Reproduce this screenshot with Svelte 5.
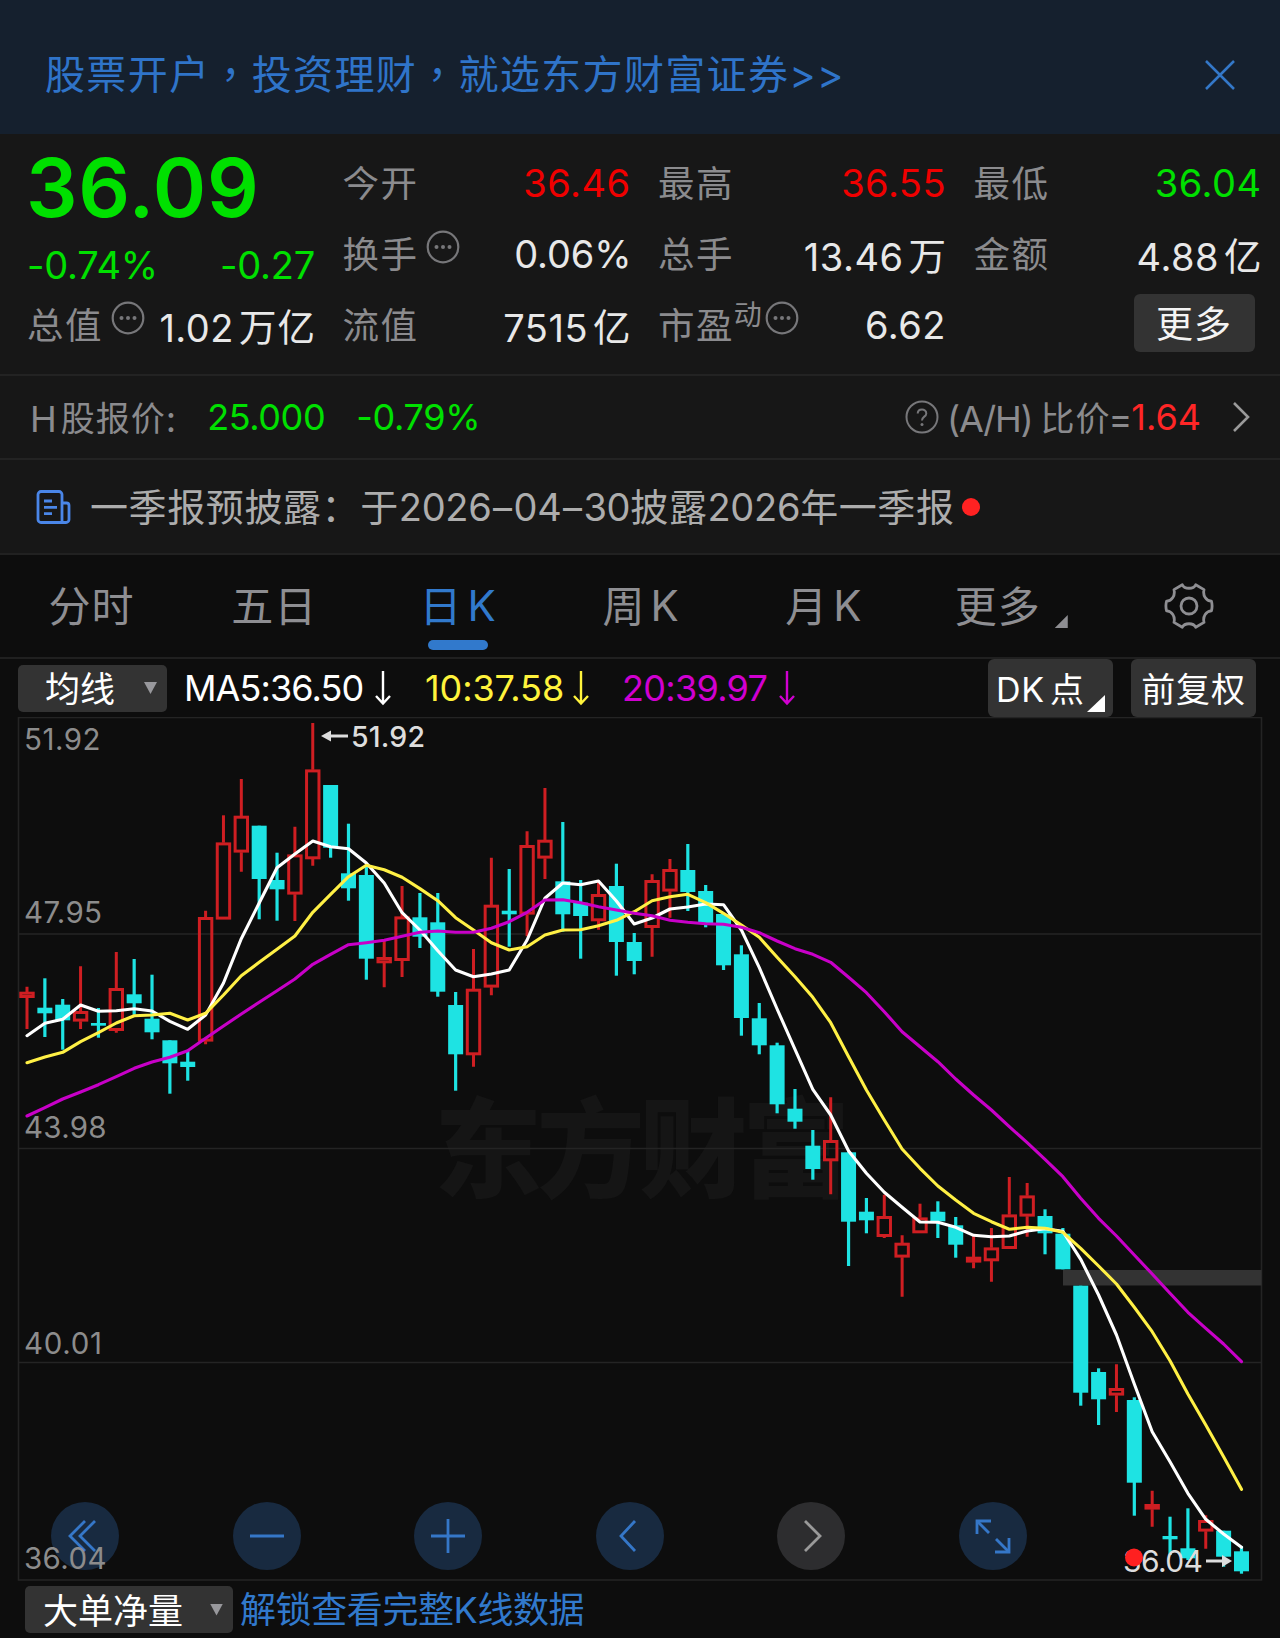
<script>
  const tabs = ['分时', '五日', '日K', '周K', '月K'];
  let activeTab = '日K';

  // chart geometry
  const firstX = 27;
  const step = 17.86;
  const bodyWidth = 15;

  const gridLines = [934, 1148.5, 1362.5];
  const axisLabels = [
    { text: '51.92', y: 750, width: 76.5 },
    { text: '47.95', y: 923, width: 78 },
    { text: '43.98', y: 1138, width: 82.5 },
    { text: '40.01', y: 1353.5, width: 78 },
    { text: '36.04', y: 1569, width: 82.5 }
  ];

  // [up, high, body top, body bottom, low]
  const candles = [
    [1, 986.7, 992, 997.7, 1029], [0, 978.3, 1007.7, 1013.3, 1037], [0, 999, 1004.7, 1020.3, 1049.7],
    [1, 966.3, 1011.3, 1021.3, 1029], [0, 1008, 1023, 1025.7, 1037.7], [1, 952, 988.3, 1030.7, 1032.7],
    [0, 959, 994.3, 1003.3, 1014.7], [0, 974.7, 1018.7, 1032.3, 1039.3], [0, 1040.3, 1040.3, 1063.3, 1093.7],
    [0, 1051, 1061.7, 1067, 1080.7], [1, 910.7, 917.3, 1041.3, 1044.3], [1, 815.3, 842.7, 919.3, 919.3],
    [1, 779, 816, 852.3, 871.7], [0, 825.7, 825.7, 879, 919.3], [0, 852.7, 880, 889.3, 920.7],
    [1, 826.7, 854.7, 894.3, 921], [1, 723, 769.7, 859, 865.7], [0, 785, 785, 847.7, 857.7],
    [0, 823.7, 873.3, 888.3, 900.7], [0, 865, 875, 958.7, 979.7], [1, 940.7, 957.3, 963, 987.3],
    [1, 886, 916.7, 960.7, 977], [0, 893, 917.3, 936.7, 948], [0, 893, 922.3, 991.7, 996.7],
    [0, 992, 1005, 1054.3, 1090.7], [1, 949, 989, 1055, 1066.7], [1, 857.7, 905, 987.3, 995.3],
    [0, 869, 910.7, 914.3, 946.7], [1, 831.3, 845.3, 914.3, 936.3], [1, 788, 840, 858.3, 879],
    [0, 822, 881.3, 914.3, 931.7], [0, 880, 902.7, 916, 958.7], [1, 882, 894.3, 921, 929.7],
    [0, 863.7, 886, 942, 975.7], [0, 933, 942, 961, 974.3], [1, 874.3, 880.3, 927.7, 956.7],
    [1, 859, 869.3, 891.3, 917.7], [0, 844, 870, 892, 911], [0, 885, 891, 923, 927.3],
    [0, 914, 914, 965.3, 970], [0, 945.3, 954.3, 1018, 1035.7], [0, 1003, 1018.3, 1045.3, 1054.3],
    [0, 1042.7, 1045.3, 1104.3, 1113.3], [0, 1089, 1108.7, 1121.7, 1128.7], [0, 1130, 1145.7, 1169, 1179.7],
    [1, 1097.3, 1140.3, 1161, 1194.3], [0, 1152.3, 1152.3, 1221.7, 1266], [0, 1198, 1211.7, 1220.3, 1233.3],
    [1, 1194.7, 1216.3, 1236.7, 1238], [1, 1235.3, 1243, 1257.3, 1296.7], [1, 1203.7, 1217.7, 1233, 1233],
    [0, 1201.3, 1211.7, 1221.3, 1238], [0, 1217, 1225.3, 1244.7, 1257.7], [1, 1235.3, 1257, 1262.3, 1268.3],
    [1, 1228, 1247.7, 1261, 1281.7], [1, 1177, 1214.7, 1248.7, 1248.7], [1, 1183, 1195.7, 1216.3, 1236.7],
    [0, 1209.3, 1216, 1233.3, 1254.3], [0, 1228, 1233.7, 1269.3, 1269.3], [0, 1285.7, 1285.7, 1392.7, 1405.7],
    [0, 1368.3, 1372, 1399.3, 1425], [1, 1364.3, 1388.3, 1395.3, 1412], [0, 1397.3, 1400, 1482.7, 1515.7],
    [1, 1490.7, 1504.3, 1509.3, 1526.7], [0, 1516.7, 1536, 1539.3, 1555], [0, 1508.3, 1548.3, 1558.3, 1560],
    [1, 1515.3, 1520.3, 1531.3, 1548.7], [0, 1530.7, 1530.7, 1556.7, 1566.7], [0, 1546, 1551.3, 1571.3, 1573.7]
  ];

  const averages = [
    {
      color: '#ffffff',
      ys: [1035.7, 1023.3, 1019.3, 1005, 1011.3, 1010.7, 1008.7, 1011, 1021.3, 1029.3, 1015, 983, 938.7, 903, 867.7,
        854, 841, 846.7, 848.7, 863, 883, 912.7, 930, 950.7, 970, 976.7, 974, 970, 940, 898.3, 883, 884.7, 881, 901,
        924, 918, 909, 907, 904, 904.7, 930, 967.7, 1009, 1049.3, 1089.3, 1115, 1151, 1173.3, 1192.3, 1207.3, 1222,
        1222.3, 1227.3, 1235.3, 1236.7, 1236, 1231, 1228.7, 1231.3, 1259.3, 1295, 1335, 1384, 1431.7, 1461.7, 1493.3,
        1519.3, 1534, 1547.3]
    },
    {
      color: '#fff045',
      ys: [1062.7, 1057, 1052.3, 1041.7, 1032.7, 1023, 1015.7, 1015, 1013.3, 1020, 1013.3, 995, 975.7, 962.3, 949.3,
        936, 912.3, 894.3, 876.7, 865.3, 869.7, 877.3, 888.6, 900.7, 917.7, 930, 942.7, 950, 946.7, 935, 930, 929.7,
        925.7, 920.3, 911.7, 900.7, 896.7, 894.3, 902.7, 913.3, 925, 937.3, 957.3, 976.7, 997.3, 1022.7, 1056.7, 1090,
        1120, 1149, 1168.3, 1186, 1200, 1213.3, 1221.7, 1229.3, 1227.3, 1228.3, 1232.3, 1248.3, 1266, 1284, 1307.3,
        1331.7, 1360.7, 1394, 1425, 1456.7, 1489.3]
    },
    {
      color: '#c800c8',
      ys: [1116, 1107.7, 1099, 1092, 1084.7, 1076.7, 1068.3, 1062, 1057.3, 1050.7, 1038.3, 1026, 1014, 1002.3, 990.7,
        979, 964.3, 954.3, 944.7, 942.7, 940.3, 936.3, 932.3, 931, 932.3, 932.3, 928.3, 921.7, 912.3, 900, 899.7,
        902.7, 906.7, 910, 913.3, 915.7, 920.3, 922.3, 923.7, 924.3, 927.3, 932.7, 941, 948.7, 954.3, 962.3, 977.3,
        992.7, 1011.7, 1031.7, 1046.7, 1061.7, 1079, 1095, 1110, 1126.7, 1142.7, 1159.3, 1176.7, 1198.3, 1218.3, 1236,
        1255, 1274, 1293.3, 1312.3, 1328.3, 1344, 1361.7]
    }
  ];

  const xAt = (i) => firstX + i * step;
  const toPoints = (ys) => ys.map((y, i) => `${xAt(i).toFixed(1)},${y}`).join(' ');

  const tools = [
    { name: '最早', paths: ['M34 19 19 34 34 49', 'M44 19 29 34 44 49'] },
    { name: '缩小', paths: ['M17 34H51'] },
    { name: '放大', paths: ['M17 34H51', 'M34 17V51'] },
    { name: '左移', paths: ['M39 19 25 34 39 49'] },
    { name: '右移', paths: ['M28 19 43 34 28 49'], disabled: true },
    { name: '全屏', paths: ['M18 32V19H32', 'M18 19 30 31', 'M50 36V50H36', 'M50 50 37 37'] }
  ];
</script>

{#snippet dots()}
  <svg class="dots" width="34" height="34" viewBox="0 0 34 34">
    <circle cx="17" cy="17" r="15.3" />
    <g><circle cx="10.5" cy="17" r="2" /><circle cx="17" cy="17" r="2" /><circle cx="23.5" cy="17" r="2" /></g>
  </svg>
{/snippet}

{#snippet downArrow()}
  <svg class="down" width="18" height="36" viewBox="0 0 18 36">
    <path d="M9 1V33M2 26 9 33.5 16 26" />
  </svg>
{/snippet}

<div class="page">
  <header class="banner">
    <span class="promo">股票开户，投资理财，就选东方财富证券&gt;&gt;</span>
    <svg width="32" height="32" viewBox="0 0 32 32"><path d="M2 2 30 30M30 2 2 30" /></svg>
  </header>

  <section class="quote">
    <div class="col">
      <div class="price">36.09</div>
      <div class="change down-color"><span>-0.74%</span><span>-0.27</span></div>
      <div class="stat"><span class="name">总值{@render dots()}</span><b>1.02<i>万亿</i></b></div>
    </div>
    <div class="col">
      <div class="stat"><span class="name">今开</span><b class="up-color">36.46</b></div>
      <div class="stat"><span class="name">换手{@render dots()}</span><b class="percent">0.06%</b></div>
      <div class="stat"><span class="name">流值</span><b>7515<i>亿</i></b></div>
    </div>
    <div class="col">
      <div class="stat"><span class="name">最高</span><b class="up-color">36.55</b></div>
      <div class="stat"><span class="name">总手</span><b>13.46<i>万</i></b></div>
      <div class="stat"><span class="name pe">市盈<sup>动</sup>{@render dots()}</span><b>6.62</b></div>
    </div>
    <div class="col">
      <div class="stat"><span class="name">最低</span><b class="down-color">36.04</b></div>
      <div class="stat"><span class="name">金额</span><b>4.88<i>亿</i></b></div>
      <div class="stat more-row"><button class="more">更多</button></div>
    </div>
  </section>

  <section class="hshare">
    <span class="hlabel">H<i>股报价</i>:</span>
    <span class="hprice">25.000</span>
    <span class="hchange">-0.79%</span>
    <svg class="help" width="34" height="34" viewBox="0 0 34 34">
      <circle cx="17" cy="17" r="15.5" />
      <path d="M12.7 13.6C12.7 8.2 21.3 8.2 21.3 13.4C21.3 16.6 17 16.7 17 20.4" />
      <circle class="pt" cx="17" cy="24.4" r="1.5" />
    </svg>
    <span class="ratio"><em>(A/H)</em><i>比价</i><u>=</u></span>
    <span class="ratio-value">1.64</span>
    <svg class="chevron" width="20" height="34" viewBox="0 0 20 34"><path d="M3 3 17 17 3 31" /></svg>
  </section>

  <section class="news">
    <svg width="36" height="36" viewBox="0 0 36 36">
      <path d="M5 2.5H23A3 3 0 0 1 26 5.5V33.5H5A3 3 0 0 1 2 30.5V5.5A3 3 0 0 1 5 2.5ZM26 14H30.5A2.5 2.5 0 0 1 33 16.5V30.5A3 3 0 0 1 30 33.5H26" />
      <path d="M8 12H16M8 18.3H21M8 24.6H16" />
    </svg>
    <p>一季报预披露：于<em>2026<i>–</i>04<i>–</i>30</em>披露<em>2026</em>年一季报</p>
    <span class="dot"></span>
  </section>

  <nav class="tabs">
    {#each tabs as tab}
      <button class="tab" class:active={tab === activeTab} on:click={() => (activeTab = tab)}>
        {#if tab.endsWith('K')}<span>{tab[0]}</span><em>K</em>{:else}<span>{tab}</span>{/if}
      </button>
    {/each}
    <button class="tab more-tab"><span>更多</span><span class="corner"></span></button>
    <button class="tab" aria-label="设置">
      <svg width="50" height="50" viewBox="0 0 50 50">
        <path d="M18.3 3.8C20.5 8.4 29.5 8.4 31.7 3.8L40 8.6C38.6 14.5 42 20 47.4 20.2Q48.8 25 47.4 29.8C42 30 38.6 35.5 40 41.4L31.7 46.2C29.5 41.6 20.5 41.6 18.3 46.2L10 41.4C11.4 35.5 8 30 2.6 29.8Q1.2 25 2.6 20.2C8 20 11.4 14.5 10 8.6Z" />
        <circle cx="25" cy="25" r="8" />
      </svg>
    </button>
  </nav>

  <section class="legend">
    <button class="select ma-select"><span>均线</span><span class="caret"></span></button>
    <span class="ma ma5">MA5:36.50{@render downArrow()}</span>
    <span class="ma ma10">10:37.58{@render downArrow()}</span>
    <span class="ma ma20">20:39.97{@render downArrow()}</span>
    <button class="tag dk"><em>DK</em>点<span class="corner"></span></button>
    <button class="tag">前复权</button>
  </section>

  <section class="chart">
    <svg width="1280" height="864" viewBox="0 717 1280 864">
      <text class="watermark" x="434" y="1189" textLength="416">东方财富</text>
      <g class="grid">
        <rect x="18.5" y="717.5" width="1243" height="862.5" />
        {#each gridLines as y}
          <line x1="18" x2="1262" y1={y} y2={y} />
        {/each}
      </g>
      <!-- unfilled price gap -->
      <rect x="1063" y="1270" width="198.5" height="15.5" fill="#333333" />
      <g class="candles">
        {#each candles as [up, high, top, bottom, low], i}
          {@const x = xAt(i)}
          {#if up}
            <path class="up" d="M{x} {high}V{top}M{x} {bottom}V{low}" />
            <rect class="up" x={x - 6.2} y={top + 1.2} width={bodyWidth - 2.6} height={Math.max(bottom - top - 2.4, 1.5)} />
          {:else}
            <path class="fall" d="M{x} {high}V{low}" />
            <rect class="fall-body" x={x - bodyWidth / 2} y={top} width={bodyWidth} height={bottom - top} />
          {/if}
        {/each}
      </g>
      {#each averages as line}
        <polyline class="avg" points={toPoints(line.ys)} stroke={line.color} />
      {/each}
      <g class="mark">
        <path d="M328 736H348" /><path class="head" d="M321 736 331 730.5V741.5Z" />
        <text x="351" y="746.5" textLength="74">51.92</text>
      </g>
    </svg>

    <div class="tools">
      {#each tools as tool}
        <button class:disabled={tool.disabled} aria-label={tool.name}>
          <svg width="68" height="68" viewBox="0 0 68 68">
            {#each tool.paths as d}<path {d} />{/each}
          </svg>
        </button>
      {/each}
    </div>

    <svg class="overlay" width="1280" height="864" viewBox="0 717 1280 864">
      {#each axisLabels as label}
        <text class="axis" x="24" y={label.y} textLength={label.width}>{label.text}</text>
      {/each}
      <g class="mark low">
        <text x="1123" y="1572" textLength="80">36.04</text>
        <path d="M1206 1561H1224" /><path class="head" d="M1232 1561 1222 1555V1567Z" />
      </g>
      <circle cx="1134" cy="1557.5" r="9" fill="#ff2020" />
    </svg>
  </section>

  <footer class="bottom">
    <button class="select flow-select"><span>大单净量</span><span class="caret"></span></button>
    <a href="#unlock">解锁查看完整<em>K</em>线数据</a>
  </footer>
</div>

<style>
  :global(body) {
    margin: 0;
    background: #0d0d0d;
  }

  .page {
    width: 1280px;
    height: 1638px;
    overflow: hidden;
    display: flex;
    flex-direction: column;
    background: #0d0d0d;
    color: #e8e8e8;
    font-family: Inter, 'Noto Sans CJK SC', sans-serif;
    font-weight: 400;
    white-space: nowrap;
  }

  svg {
    fill: none;
    flex: none;
    display: block;
  }

  i,
  em {
    font-style: normal;
  }

  button {
    border: 0;
    padding: 0;
    margin: 0;
    background: none;
    color: inherit;
    font: inherit;
  }

  .up-color {
    color: #f00000;
  }

  .down-color {
    color: #00e000;
  }

  .banner {
    box-sizing: border-box;
    height: 134px;
    padding: 15px 44px 0 45px;
    display: flex;
    align-items: center;
    justify-content: space-between;
    background: #15202e;
    color: #2f74c9;
    font-size: 40px;
    font-family: Inter, 'Noto Sans CJK TC', sans-serif;
    letter-spacing: 1.35px;
  }

  .promo {
    padding-bottom: 5px;
  }

  .banner svg {
    stroke: #3478c8;
    stroke-width: 2.5;
  }

  .quote {
    box-sizing: border-box;
    height: 242px;
    padding: 14px 18px 0 28px;
    display: grid;
    grid-template-columns: repeat(4, 287px);
    column-gap: 28.5px;
    background: #171717;
    border-bottom: 2px solid #232323;
  }

  .col {
    display: flex;
    flex-direction: column;
  }

  .stat,
  .change {
    height: 71px;
    display: flex;
    align-items: center;
    justify-content: space-between;
    font-size: 38px;
  }

  .name {
    display: flex;
    align-items: center;
    margin-left: -1px;
    padding-bottom: 4px;
    color: #8b8b8e;
    font-size: 36.5px;
    letter-spacing: 1.4px;
  }

  .stat b {
    padding-bottom: 1px;
    font-weight: 400;
    letter-spacing: 0.5px;
  }

  .stat .percent {
    letter-spacing: -0.1px;
    margin-right: -1px;
  }

  .stat i {
    position: relative;
    top: -1px;
    font-size: 37.5px;
    letter-spacing: 1px;
    margin-left: 5px;
    margin-right: -1px;
  }

  .name :global(.dots) {
    margin: -11px 0 0 8px;
    stroke: #77777a;
    stroke-width: 2.2;
  }

  .dots g {
    fill: #77777a;
    stroke: none;
  }

  .pe sup {
    font-size: 28px;
    line-height: 28px;
    margin-top: -18px;
    letter-spacing: 0;
  }

  .pe :global(.dots) {
    margin-left: 3px;
  }

  .price {
    height: 80px;
    line-height: 80px;
    margin-left: -2px;
    color: #00e000;
    font-size: 81px;
    font-weight: 600;
    letter-spacing: 0.8px;
  }

  .change {
    height: 62px;
    padding-top: 6px;
    margin: 0 0 -6px -1px;
    letter-spacing: -0.2px;
  }

  .more-row {
    justify-content: flex-end;
    padding-right: 7px;
  }

  .more {
    width: 121px;
    height: 58px;
    margin-top: -5px;
    padding-bottom: 2px;
    border-radius: 6px;
    background: #333333;
    color: #f4f4f4;
    font-size: 37px;
    letter-spacing: 1px;
  }

  .hshare {
    box-sizing: border-box;
    height: 84px;
    padding: 0 29px 0 30px;
    display: flex;
    align-items: center;
    background: #171717;
    border-bottom: 2px solid #232323;
    color: #8b8b8e;
    font-size: 36px;
  }

  .hlabel i,
  .ratio i {
    position: relative;
    top: -1px;
    font-size: 34px;
    letter-spacing: 1px;
    margin-left: 4px;
  }

  .hprice {
    margin-left: 31px;
    color: #00e000;
    letter-spacing: -0.4px;
  }

  .hchange {
    margin-left: 31px;
    color: #00e000;
    letter-spacing: -0.3px;
  }

  .help {
    margin-left: auto;
    margin-right: 8px;
    stroke: #77777a;
    stroke-width: 2;
  }

  .help .pt {
    fill: #77777a;
    stroke: none;
  }

  .ratio em {
    letter-spacing: -1.2px;
  }

  .ratio i {
    margin-left: 8px;
  }

  .ratio u {
    text-decoration: none;
    margin: 0 -1px 0 -2px;
  }

  .ratio-value {
    color: #ff2626;
  }

  .chevron {
    margin-left: 30px;
    stroke: #9a9a9a;
    stroke-width: 2.6;
  }

  .news {
    box-sizing: border-box;
    height: 95px;
    padding: 0 36px;
    display: flex;
    align-items: center;
    background: #171717;
    border-bottom: 2px solid #212121;
    color: #adadad;
  }

  .news svg {
    stroke: #4a86e8;
    stroke-width: 2.8;
  }

  .news p {
    margin: 0 0 0 18px;
    padding-bottom: 5px;
    font-size: 38px;
    letter-spacing: 0.6px;
  }

  .news em {
    letter-spacing: -0.3px;
  }

  .news i {
    letter-spacing: 1.5px;
    margin-left: 1.5px;
  }

  .dot {
    width: 18px;
    height: 18px;
    margin-left: 7px;
    border-radius: 50%;
    background: #ff2222;
  }

  .tabs {
    box-sizing: border-box;
    height: 104px;
    display: grid;
    grid-template-columns: repeat(7, 1fr);
    border-bottom: 2px solid #202020;
  }

  .tab {
    position: relative;
    display: flex;
    align-items: center;
    justify-content: center;
    color: #8e8e92;
    font-size: 42px;
    letter-spacing: 1px;
  }

  .tab span,
  .tab em {
    padding-bottom: 5px;
  }

  .tab em {
    padding-bottom: 1px;
    margin: 0 -2px 0 5px;
  }

  .tab.active {
    color: #3179cc;
  }

  .tab.active::after {
    content: '';
    position: absolute;
    left: 62px;
    bottom: 7px;
    width: 60px;
    height: 10px;
    border-radius: 5px;
    background: #3179cc;
  }

  .tab svg {
    margin-top: -1px;
    stroke: #8e8e92;
    stroke-width: 2.8;
    stroke-linejoin: round;
  }

  .corner {
    width: 13px;
    height: 13px;
    background: currentColor;
    clip-path: polygon(100% 0, 100% 100%, 0 100%);
  }

  .more-tab {
    padding-left: 11px;
  }

  .more-tab .corner {
    padding: 0;
    margin: 31px 0 0 14px;
  }

  .legend {
    height: 58px;
    padding: 0 24px 0 18px;
    display: flex;
    align-items: center;
    font-size: 36px;
  }

  .select {
    box-sizing: border-box;
    height: 47px;
    display: flex;
    align-items: center;
    justify-content: space-between;
    border-radius: 5px;
    background: #333333;
    color: #ffffff;
    font-size: 35px;
  }

  .select span:first-child {
    padding-bottom: 3px;
  }

  .ma-select {
    width: 149px;
    padding: 0 10px 0 27px;
    margin-right: 17px;
  }

  .select .caret {
    width: 13px;
    height: 12px;
    background: #98989c;
    clip-path: polygon(0 0, 100% 0, 50% 100%);
  }

  .ma {
    display: flex;
    align-items: center;
  }

  .ma :global(.down) {
    margin-left: 11px;
    stroke: currentColor;
    stroke-width: 2.4;
  }

  .ma5 {
    width: 241px;
    color: #ffffff;
    letter-spacing: -0.9px;
  }

  .ma10 {
    width: 197px;
    color: #fff33c;
    letter-spacing: -0.1px;
  }

  .ma10 :global(.down) {
    margin-left: 8px;
  }

  .ma20 {
    color: #d000d0;
    letter-spacing: -0.7px;
  }

  .tag {
    position: relative;
    width: 125px;
    height: 58px;
    margin-left: 18px;
    padding-bottom: 2px;
    border-radius: 6px;
    background: #333333;
    color: #ffffff;
    font-size: 34px;
    letter-spacing: 0.8px;
  }

  .tag.dk {
    margin-left: auto;
    text-align: left;
    padding-left: 8px;
  }

  .dk em {
    margin-right: 5px;
  }

  .dk .corner {
    position: absolute;
    right: 8px;
    bottom: 5px;
    width: 18px;
    height: 17px;
  }

  .chart {
    position: relative;
    height: 864px;
  }

  .grid {
    stroke: #242424;
    stroke-width: 1.6;
  }

  .watermark {
    fill: #151515;
    font-size: 108px;
    font-weight: 900;
  }

  .up {
    stroke: #cf1e22;
    stroke-width: 3;
  }

  .fall {
    stroke: #1ee3e3;
    stroke-width: 3.2;
  }

  .fall-body {
    fill: #1ee3e3;
  }

  .avg {
    stroke-width: 3.1;
    stroke-linejoin: round;
    stroke-linecap: round;
  }

  .axis {
    fill: #8c8c8c;
    font-size: 29.5px;
  }

  .mark {
    stroke: #dddddd;
    stroke-width: 3;
  }

  .mark text,
  .mark .head {
    fill: #dddddd;
    stroke: none;
    font-size: 28.5px;
    font-weight: 500;
  }

  .mark.low text {
    font-size: 30px;
    font-weight: 400;
  }

  .overlay {
    position: absolute;
    inset: 0;
    pointer-events: none;
  }

  .tools {
    position: absolute;
    left: 51px;
    bottom: 11px;
    width: 976px;
    display: flex;
    justify-content: space-between;
  }

  .tools button {
    width: 68px;
    height: 68px;
    border-radius: 50%;
    background: #182a40;
  }

  .tools svg {
    stroke: #3577c8;
    stroke-width: 2.8;
  }

  .tools .disabled {
    background: #2d2d2f;
  }

  .tools .disabled svg {
    stroke: #9a9a9a;
  }

  .bottom {
    height: 57px;
    padding: 0 0 0 25px;
    display: flex;
    align-items: center;
  }

  .flow-select {
    width: 208px;
    padding: 0 10px 0 18px;
  }

  .bottom a {
    margin-left: 7px;
    padding-bottom: 6px;
    color: #3179cc;
    font-size: 36px;
    letter-spacing: -0.4px;
    text-decoration: none;
  }
</style>
